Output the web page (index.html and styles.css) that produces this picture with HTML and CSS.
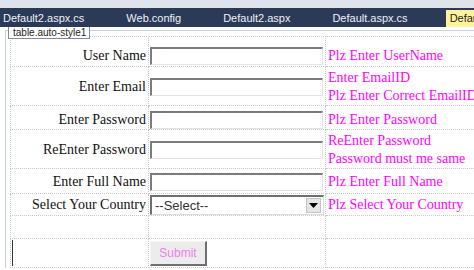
FILE: index.html
```html
<!DOCTYPE html>
<html lang="en">
<head>
    <meta charset="UTF-8">
    <meta name="viewport" content="width=device-width, initial-scale=1.0">
    <title>Register - Design</title>
    <link rel="stylesheet" href="styles.css">
</head>
<body>
    <div class="doc-tabs">
        <span class="tab first">Default2.aspx.cs</span>
        <span class="tab">Web.config</span>
        <span class="tab">Default2.aspx</span>
        <span class="tab">Default.aspx.cs</span>
        <span class="tab active">Default.aspx</span>
    </div>

    <div class="designer">
        <span class="tag-label">table.auto-style1</span>
        <div class="selection">
            <table class="form-table">
                <colgroup>
                    <col class="col-label">
                    <col class="col-field">
                    <col class="col-msg">
                </colgroup>
                <tr class="row-1">
                    <td class="label">User Name</td>
                    <td class="field"><input type="text" class="text-box"></td>
                    <td class="msg"><span>Plz Enter UserName</span></td>
                </tr>
                <tr class="row-2">
                    <td class="label">Enter Email</td>
                    <td class="field"><input type="text" class="text-box"></td>
                    <td class="msg"><span>Enter EmailID</span><span>Plz Enter Correct EmailID</span></td>
                </tr>
                <tr class="row-3">
                    <td class="label">Enter Password</td>
                    <td class="field"><input type="password" class="text-box"></td>
                    <td class="msg"><span>Plz Enter Password</span></td>
                </tr>
                <tr class="row-4">
                    <td class="label">ReEnter Password</td>
                    <td class="field"><input type="password" class="text-box"></td>
                    <td class="msg"><span>ReEnter Password</span><span>Password must me same</span></td>
                </tr>
                <tr class="row-5">
                    <td class="label">Enter Full Name</td>
                    <td class="field"><input type="text" class="text-box"></td>
                    <td class="msg"><span>Plz Enter Full Name</span></td>
                </tr>
                <tr class="row-6">
                    <td class="label">Select Your Country</td>
                    <td class="field">
                        <div class="drop-down">
                            <span>--Select--</span>
                            <span class="drop-btn">
                                <svg width="9" height="5" viewBox="0 0 9 5"><path d="M0 0h9L4.5 5z" fill="#000"/></svg>
                            </span>
                        </div>
                    </td>
                    <td class="msg"><span>Plz Select Your Country</span></td>
                </tr>
                <tr class="row-7">
                    <td></td>
                    <td></td>
                    <td></td>
                </tr>
                <tr class="row-8">
                    <td class="caret-cell"><span class="caret"></span></td>
                    <td class="field"><button type="button" class="submit-btn">Submit</button></td>
                    <td></td>
                </tr>
            </table>
        </div>
    </div>
</body>
</html>
```

FILE: styles.css
```css
body {
    margin: 0;
    width: 474px;
    height: 270px;
    overflow: hidden;
    background: #fff;
    font-family: "Liberation Serif", "Times New Roman", serif;
}

/* document tab strip */
.doc-tabs {
    display: flex;
    height: 19px;
    border-top: 8px solid #dfe3ec;
    background: #2b3a57;
    font-family: "Liberation Sans", Arial, sans-serif;
    font-size: 11px;
    white-space: nowrap;
}

.tab {
    padding: 4px 21px 0;
    color: #eef1f6;
}

.tab.first {
    padding-left: 3px;
}

.tab.active {
    margin: 2px 0 0 17px;
    padding: 2px 4px 0;
    background: #fff29d;
    color: #1e1e1e;
}

/* design surface */
.designer {
    position: relative;
    padding: 3px 0 0 5px;
}

.tag-label {
    position: absolute;
    top: 0;
    left: 8px;
    padding: 0 3px 0 4px;
    height: 11px;
    line-height: 11px;
    border: 1px solid #7d8aa6;
    border-top: none;
    background: #fff;
    color: #1e1e1e;
    font-family: "Liberation Sans", Arial, sans-serif;
    font-size: 10px;
}

.selection {
    border-top: 1px solid #c3d0e6;
    border-left: 1px solid #c3d0e6;
    padding: 5px 0 0 4px;
}

.form-table {
    border-collapse: collapse;
    table-layout: fixed;
    width: 520px;
    font-size: 14px;
}

.col-label { width: 138px; }
.col-field { width: 177px; }

.form-table td {
    box-sizing: border-box;
    border: 1px dotted #c9c9c9;
    padding: 0;
    vertical-align: middle;
    white-space: nowrap;
}

.row-1 td { height: 30px; padding-top: 8px; }
.row-2 td { height: 38px; padding-top: 2px; }
.row-3 td { height: 24px; padding-top: 4px; }
.row-4 td { height: 38px; padding-top: 2px; }
.row-5 td { height: 25px; padding-top: 2px; }
.row-6 td { height: 22px; padding-top: 1px; }
.row-7 td { height: 23px; }
.row-8 td { height: 29px; }

.label {
    text-align: right;
    padding-right: 2px !important;
    color: #111;
}

.field {
    padding-left: 1px !important;
}

.msg {
    padding-left: 2px !important;
    color: #ff00ff;
}

.msg span {
    display: block;
    line-height: 18px;
}

.text-box {
    display: block;
    box-sizing: border-box;
    width: 173px;
    height: 18px;
    margin: 0;
    border-style: solid;
    border-width: 2px 1px 1px 2px;
    border-color: #7c7c7c #e3e3e3 #e3e3e3 #7c7c7c;
    background: #fff;
}

.drop-down {
    display: flex;
    align-items: center;
    justify-content: space-between;
    box-sizing: border-box;
    width: 174px;
    height: 20px;
    padding: 0 2px 0 3px;
    border-style: solid;
    border-width: 2px 1px 1px 2px;
    border-color: #6e6e6e #dcdcdc #dcdcdc #6e6e6e;
    font-family: "Liberation Sans", Arial, sans-serif;
    font-size: 13px;
    color: #333;
}

.drop-btn {
    display: flex;
    align-items: center;
    justify-content: center;
    width: 15px;
    height: 15px;
    background: #e6e6e6;
    border: 1px solid #c4c4c4;
    box-sizing: border-box;
}

.caret-cell {
    padding-left: 1px !important;
}

.caret {
    display: block;
    width: 1px;
    height: 26px;
    background: #333;
}

.submit-btn {
    display: block;
    box-sizing: border-box;
    width: 57px;
    height: 25px;
    margin: 0;
    padding: 0;
    border-style: solid;
    border-width: 1px 2px 2px 1px;
    border-color: #f4f4f4 #6f6f6f #6f6f6f #f4f4f4;
    background: #ececec;
    color: #ee80ee;
    font-family: "Liberation Sans", Arial, sans-serif;
    font-size: 12px;
}
```
